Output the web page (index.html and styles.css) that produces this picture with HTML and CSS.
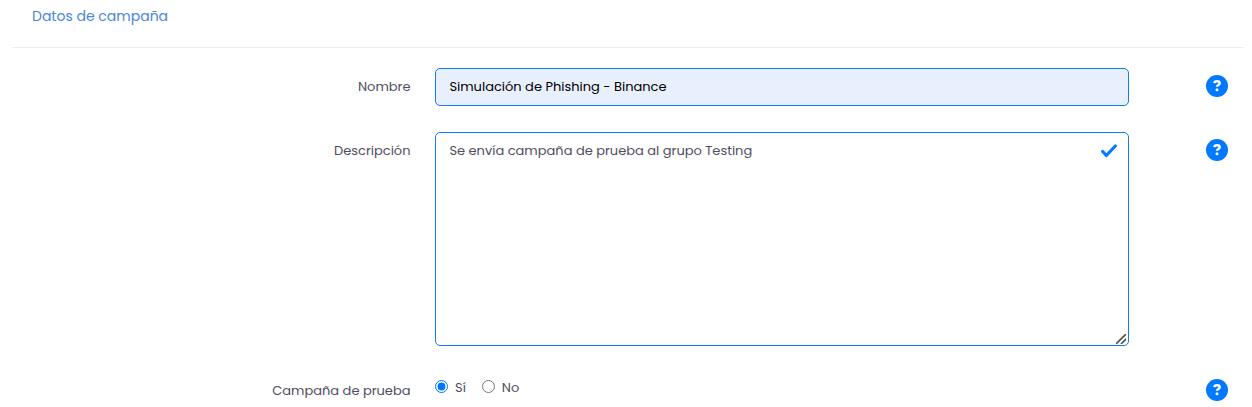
FILE: index.html
```
<!DOCTYPE html>
<html lang="es">
<head>
    <meta charset="UTF-8">
    <title>Datos de campaña</title>
    <link rel="stylesheet" href="styles.css">
</head>
<body>
    <div class="panel">
        <h3 class="panel-title">Datos de campaña</h3>
        <form id="campaignForm">
            <div class="form-group">
                <label for="name">Nombre</label>
                <input type="text" id="name" class="form-control" value="Simulación de Phishing - Binance">
                <svg class="help" viewBox="0 0 22 22">
                    <circle cx="11" cy="11" r="11"/>
                    <path d="M8 8C8.5 6.9 9.6 6.3 11 6.3c1.6 0 2.7.7 2.7 1.9 0 1.8-2.7 1.6-2.7 3.6"/>
                    <circle class="dot" cx="11" cy="14.8" r="1.5"/>
                </svg>
            </div>
            <div class="form-group">
                <label for="description">Descripción</label>
                <div class="textarea-wrap">
                    <textarea id="description" class="form-control" spellcheck="false">Se envía campaña de prueba al grupo Testing</textarea>
                    <svg class="check" viewBox="0 0 16 14">
                        <path d="M1.7 7.5L5.3 11.5L14.3 2"/>
                    </svg>
                    <svg class="grip" viewBox="0 0 10 10">
                        <path d="M0.5 9.5L9.5 0.5M5.5 9.5L9.5 5.5"/>
                    </svg>
                </div>
                <svg class="help" viewBox="0 0 22 22">
                    <circle cx="11" cy="11" r="11"/>
                    <path d="M8 8C8.5 6.9 9.6 6.3 11 6.3c1.6 0 2.7.7 2.7 1.9 0 1.8-2.7 1.6-2.7 3.6"/>
                    <circle class="dot" cx="11" cy="14.8" r="1.5"/>
                </svg>
            </div>
            <div class="form-group">
                <label>Campaña de prueba</label>
                <div class="radios">
                    <label class="radio"><input type="radio" name="test" checked>Sí</label>
                    <label class="radio"><input type="radio" name="test">No</label>
                </div>
                <svg class="help" viewBox="0 0 22 22">
                    <circle cx="11" cy="11" r="11"/>
                    <path d="M8 8C8.5 6.9 9.6 6.3 11 6.3c1.6 0 2.7.7 2.7 1.9 0 1.8-2.7 1.6-2.7 3.6"/>
                    <circle class="dot" cx="11" cy="14.8" r="1.5"/>
                </svg>
            </div>
        </form>
    </div>
</body>
</html>
```

FILE: styles.css
```
* {
    box-sizing: border-box;
}
body {
    margin: 0;
    background-color: white;
    font-family: Poppins, Inter, sans-serif;
    font-size: 13px;
    line-height: 20px;
    color: #4f4e60;
    overflow: hidden;
}
.panel {
    margin: 0 8px 0 12px;
}
.panel-title {
    height: 48px;
    margin: 0 0 20px;
    padding: 6px 20px 0;
    border-bottom: 1px solid #ebedf2;
    font-size: 14px;
    font-weight: 400;
    color: #4a86dc;
}
.form-group {
    display: grid;
    grid-template-columns: 398.5px 694px 22px;
    column-gap: 24.5px;
    align-items: start;
    margin-bottom: 26px;
}
.form-group > label {
    padding-top: 9px;
    text-align: right;
}
.form-control {
    display: block;
    width: 100%;
    height: 38px;
    padding: 8px 13.4px;
    border: 1px solid #0a7cff;
    border-radius: 5px;
    outline: none;
    background-color: white;
    font: inherit;
    color: #4f4e60;
}
input.form-control {
    background-color: #e8f0fe;
    color: #000;
}
.textarea-wrap {
    position: relative;
}
textarea.form-control {
    height: 214px;
    resize: none;
}
.check {
    position: absolute;
    top: 12px;
    right: 12px;
    width: 16px;
    height: 14px;
    fill: none;
    stroke: #007bff;
    stroke-width: 3.2;
    stroke-linecap: round;
    stroke-linejoin: round;
}
.grip {
    position: absolute;
    right: 3px;
    bottom: 2px;
    width: 10px;
    height: 10px;
    fill: none;
    stroke: #505050;
    stroke-width: 1.6;
    stroke-linecap: square;
    stroke-dasharray: none;
}
.help {
    width: 22px;
    height: 22px;
    margin: 7px 0 0 52px;
    fill: #007bff;
}
.help path {
    fill: none;
    stroke: white;
    stroke-width: 2.4;
}
.help .dot {
    fill: white;
}
.radios {
    display: flex;
    gap: 16px;
    padding-top: 5px;
}
.radio {
    display: flex;
    align-items: flex-start;
    line-height: 22px;
}
.radio input {
    width: 13px;
    height: 13px;
    margin: 3px 7px 0 0;
    accent-color: #0075ff;
}
```
